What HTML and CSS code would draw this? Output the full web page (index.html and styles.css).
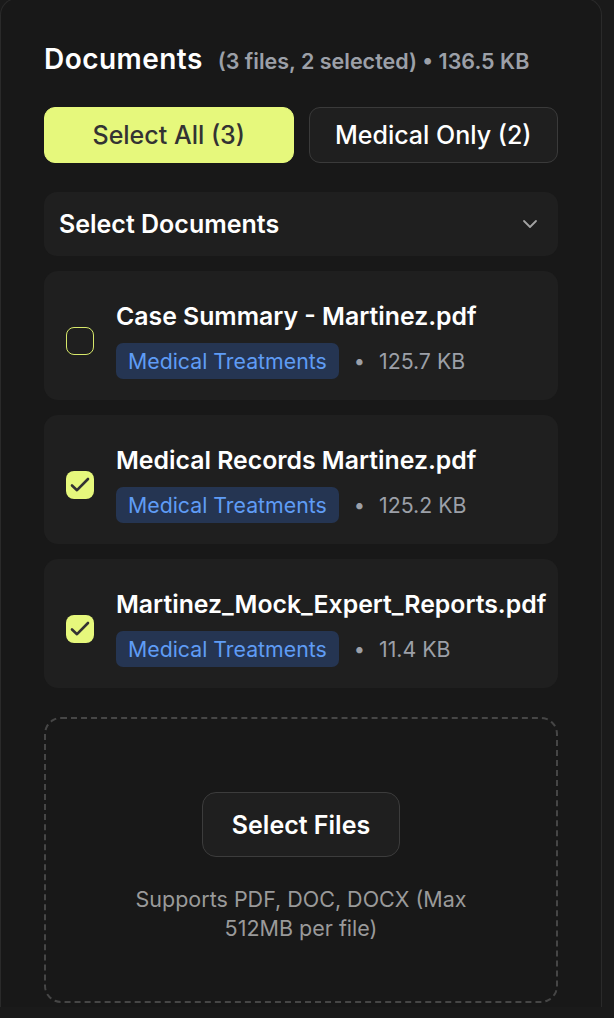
FILE: index.html
```html
<!DOCTYPE html>
<html lang="en">
<head>
<meta charset="utf-8">
<title>Documents</title>
<link rel="stylesheet" href="styles.css">
</head>
<body>
<div class="panel">
  <div class="header">
    <h2 class="title">Documents</h2>
    <span class="summary">(3 files, 2 selected) • 136.5 KB</span>
  </div>

  <div class="actions">
    <button class="btn btn-primary">Select All (3)</button>
    <button class="btn btn-outline">Medical Only (2)</button>
  </div>

  <div class="dropdown">
    <span>Select Documents</span>
    <svg class="chevron" width="20" height="20" viewBox="0 0 20 20" fill="none"><path d="M4 7l6 6 6-6" stroke="#a3a3a3" stroke-width="1.8" stroke-linecap="round" stroke-linejoin="round"/></svg>
  </div>

  <div class="list">
    <div class="card">
      <span class="check"></span>
      <div class="info">
        <div class="name">Case Summary - Martinez.pdf</div>
        <div class="meta">
          <span class="badge">Medical Treatments</span>
          <span class="dot">•</span>
          <span class="size">125.7 KB</span>
        </div>
      </div>
    </div>
    <div class="card">
      <span class="check checked"><svg width="28" height="28" viewBox="0 0 28 28" fill="none"><path d="M6 14.5l5 4.7 11-11.2" stroke="#333333" stroke-width="2.6" stroke-linecap="round" stroke-linejoin="round"/></svg></span>
      <div class="info">
        <div class="name">Medical Records Martinez.pdf</div>
        <div class="meta">
          <span class="badge">Medical Treatments</span>
          <span class="dot">•</span>
          <span class="size">125.2 KB</span>
        </div>
      </div>
    </div>
    <div class="card">
      <span class="check checked"><svg width="28" height="28" viewBox="0 0 28 28" fill="none"><path d="M6 14.5l5 4.7 11-11.2" stroke="#333333" stroke-width="2.6" stroke-linecap="round" stroke-linejoin="round"/></svg></span>
      <div class="info">
        <div class="name">Martinez_Mock_Expert_Reports.pdf</div>
        <div class="meta">
          <span class="badge">Medical Treatments</span>
          <span class="dot">•</span>
          <span class="size">11.4 KB</span>
        </div>
      </div>
    </div>
  </div>

  <div class="upload">
    <button class="btn-files">Select Files</button>
    <p class="hint">Supports PDF, DOC, DOCX (Max 512MB per file)</p>
  </div>
</div>
</body>
</html>
```

FILE: styles.css
```css
* { box-sizing: border-box; }

html, body {
  margin: 0;
  padding: 0;
  background: #1a1a1a;
  font-family: Inter, "Noto Sans", sans-serif;
  color: #ffffff;
}

.panel {
  width: 602px;
  height: 1009px;
  margin-top: -2px;
  background: #181818;
  border: 1px solid #2a2a2a;
  border-bottom: none;
  border-radius: 17px 17px 0 0;
  padding: 42px 43px 0 43px;
}

.header {
  display: flex;
  align-items: baseline;
  gap: 15px;
  height: 36px;
}

.title {
  margin: 0;
  font-size: 28px;
  line-height: 36px;
  font-weight: 600;
  letter-spacing: 0.45px;
}

.summary {
  font-size: 21.5px;
  font-weight: 600;
  color: #9ca0a8;
}

.actions {
  display: grid;
  grid-template-columns: 1fr 1fr;
  gap: 15px;
  margin-top: 30px;
}

.btn {
  height: 56px;
  border-radius: 11px;
  font-family: inherit;
  font-size: 25px;
  font-weight: 500;
  cursor: pointer;
}

.btn-primary {
  background: #e6f87c;
  border: 1px solid #e6f87c;
  color: #333333;
}

.btn-outline {
  background: #1f1f1f;
  border: 1px solid #3a3a3a;
  color: #ffffff;
}

.dropdown {
  margin-top: 29px;
  height: 64px;
  background: #1f1f1f;
  border-radius: 13px;
  display: flex;
  align-items: center;
  justify-content: space-between;
  padding: 0 18px 0 15px;
  font-size: 25px;
  font-weight: 600;
}

.chevron { display: block; }

.list {
  margin-top: 15px;
  display: flex;
  flex-direction: column;
  gap: 15px;
}

.card {
  background: #1f1f1f;
  border-radius: 14px;
  padding: 27px 10px 21px 22px;
  display: flex;
  align-items: center;
  gap: 22px;
}

.check {
  flex: none;
  width: 28px;
  height: 28px;
  margin-top: 5px;
  border-radius: 8px;
  border: 1.5px solid #d7e86a;
  display: flex;
  align-items: center;
  justify-content: center;
}

.check.checked {
  background: #e6f87c;
  border: none;
}

.check svg { display: block; }

.info {
  display: flex;
  flex-direction: column;
  gap: 9px;
  min-width: 0;
}

.name {
  font-size: 24.8px;
  line-height: 36px;
  font-weight: 600;
  white-space: nowrap;
}

.meta {
  display: flex;
  align-items: center;
  font-size: 21.3px;
  color: #9ca0a8;
}

.badge {
  height: 36px;
  display: inline-flex;
  align-items: center;
  padding: 0 12px;
  border-radius: 7px;
  background: #253552;
  color: #5f9cf5;
}

.dot {
  margin-left: 15px;
  font-size: 20px;
}

.size {
  margin-left: 14px;
}

.upload {
  margin-top: 29px;
  height: 286px;
  border: 2px dashed #464646;
  border-radius: 17px;
  display: flex;
  flex-direction: column;
  align-items: center;
  padding-top: 73px;
}

.btn-files {
  width: 198px;
  height: 65px;
  background: #1f1f1f;
  border: 1px solid #3c3c3c;
  border-radius: 14px;
  color: #ffffff;
  font-family: inherit;
  font-size: 25px;
  font-weight: 600;
}

.hint {
  margin: 28px 0 0 0;
  width: 345px;
  text-align: center;
  font-size: 21.5px;
  line-height: 29px;
  color: #9a9a9a;
}
```
